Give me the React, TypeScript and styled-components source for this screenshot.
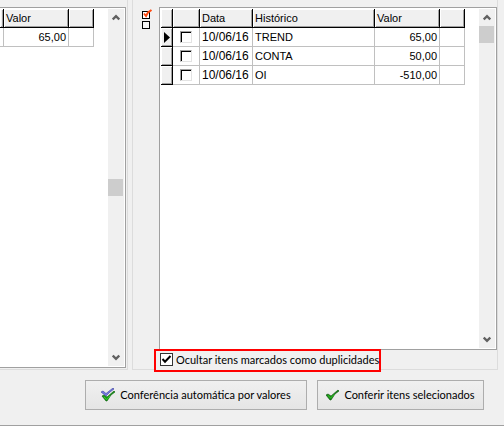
import React from "react";
import styled, { createGlobalStyle, css } from "styled-components";

const GlobalStyle = createGlobalStyle`
  * { box-sizing: border-box; }
  body {
    margin: 0;
    background: #f0f0f0;
    color: #000;
    font: 11px/16px Lato, "Liberation Sans", sans-serif;
  }
  button, input { font: inherit; color: inherit; margin: 0; }
`;

const Page = styled.main`
  display: flex;
  flex-direction: column;
  min-height: 100vh;
  border-bottom: 1px solid #a0a0a0;
  overflow: hidden;
`;

const Panels = styled.div`
  display: flex;
  flex: 1;
  gap: 4px;
  padding-right: 6px;
`;

const AccountPanel = styled.section`
  display: flex;
  flex: 0 0 128px;
  padding: 7px 1px 1px 0;
  border: solid #dcdcdc;
  border-width: 0 1px 1px 0;
`;

const StatementPanel = styled.section`
  display: flex;
  flex: 1;
  min-width: 0;
  padding-top: 7px;
  border: solid #dcdcdc;
  border-width: 0 1px 1px 1px;
`;

const StatementBody = styled.div`
  display: flex;
  flex-direction: column;
  flex: 1;
  min-width: 0;
`;

const SelectTools = styled.div`
  flex: 0 0 26px;
  padding: 2px 0 0 9px;
`;

const ToolButton = styled.button`
  display: block;
  padding: 0;
  border: 0;
  background: none;
  svg { display: block; }
`;

const GridFrame = styled.div<{ $openLeft?: boolean }>`
  display: flex;
  flex: 1;
  min-width: 0;
  padding: 1px;
  background: #fff;
  border: 1px solid #a0a0a0;
  ${(p) => p.$openLeft && css`
    border-left: 0;
    padding-left: 0;
  `}
`;

const GridArea = styled.div`
  flex: 1;
  min-width: 0;
  overflow: hidden;
`;

const Table = styled.table<{ $width: number }>`
  width: ${(p) => p.$width}px;
  table-layout: fixed;
  border-collapse: separate;
  border-spacing: 0;
  font-family: "Liberation Sans", Arial, sans-serif;
`;

const raised = css`
  background: #f0f0f0;
  border-right: 1px solid #000;
  border-bottom: 1px solid #000;
  box-shadow: inset 1px 1px #fff, inset -1px -1px #a0a0a0;
`;

const HeadCell = styled.th`
  ${raised}
  height: 19px;
  padding: 0 2px;
  font-weight: 400;
  text-align: left;
  white-space: nowrap;
  line-height: 16px;
`;

const Cell = styled.td<{ $align?: "right" | "center" }>`
  height: 19px;
  padding: 0 2px;
  border-right: 1px solid #c0c0c0;
  border-bottom: 1px solid #c0c0c0;
  text-align: ${(p) => p.$align ?? "left"};
  white-space: nowrap;
  line-height: 16px;
`;

const DateCell = styled(Cell)`
  font-size: 12px;
`;

const MarkerCell = styled.td`
  ${raised}
  height: 19px;
  padding: 0 0 0 3px;
  svg { display: block; }
`;

const RowCheck = styled.input`
  appearance: none;
  display: block;
  width: 12px;
  height: 12px;
  margin: 0 auto;
  background: #fff;
  border: 1px solid #e3e3e3;
  border-top-color: #a0a0a0;
  border-left-color: #a0a0a0;
  box-shadow: inset 1px 1px #000;
`;

const ScrollBar = styled.div`
  display: flex;
  flex-direction: column;
  flex: 0 0 16px;
  background: #f0f0f0;
`;

const ScrollArrow = styled.button`
  flex: 0 0 17px;
  padding: 0;
  border: 0;
  background: none;
  svg { display: block; margin: 0 auto 0 4px; }
`;

const Track = styled.div<{ $before: number; $after: number }>`
  display: grid;
  flex: 1;
  grid-template-rows: ${(p) => p.$before}fr 17px ${(p) => p.$after}fr;
`;

const Thumb = styled.div`
  grid-row: 2;
  width: 15px;
  background: #cdcdcd;
`;

const OptionRow = styled.div`
  display: flex;
  height: 23px;
  margin: -1px 0 -3px -5px;
  position: relative;
`;

const HideOption = styled.label`
  display: flex;
  align-items: center;
  gap: 3px;
  padding: 0 0 2px 4px;
  border: 2px solid #f00;
  background: #f0f0f0;
  white-space: nowrap;
`;

const CheckBox = styled.span`
  display: grid;
  width: 13px;
  height: 13px;
  background: #fff;
  border: 1px solid #333;
  input, svg { grid-area: 1 / 1; }
  input { appearance: none; width: 11px; height: 11px; }
  svg { pointer-events: none; visibility: hidden; }
  input:checked + svg { visibility: visible; }
`;

const Actions = styled.footer`
  display: flex;
  justify-content: flex-end;
  gap: 10px;
  padding: 10px 20px 15px 0;
`;

const ActionButton = styled.button<{ $wide?: boolean }>`
  display: flex;
  align-items: center;
  justify-content: center;
  gap: 4px;
  width: ${(p) => (p.$wide ? 222 : 167)}px;
  height: 30px;
  padding: 0;
  border: 1px solid #adadad;
  background: linear-gradient(#f0f0f0, #e5e5e5);
  white-space: nowrap;
`;

const ArrowIcon = ({ down }: { down?: boolean }) => (
  <svg width="8" height="7" viewBox="0 0 8 7">
    <path
      d={down ? "M0.7 1.5 L4 4.8 L7.3 1.5" : "M0.7 5.5 L4 2.2 L7.3 5.5"}
      fill="none"
      stroke="#606060"
      strokeWidth="2.4"
    />
  </svg>
);

const TickIcon = () => (
  <svg width="11" height="11" viewBox="0 0 11 11">
    <path d="M1.5 5 L4 7.7 L9.5 2" fill="none" stroke="#000" strokeWidth="2" />
  </svg>
);

const MarkAllIcon = () => (
  <svg width="11" height="10" viewBox="0 0 11 10">
    <rect x="0.5" y="2.5" width="7" height="7" fill="#fff" stroke="#000" />
    <path d="M2 4.5 L4 7 L6 3.5 L9.5 1" fill="none" stroke="#ff4a10" strokeWidth="2" />
  </svg>
);

const ClearAllIcon = () => (
  <svg width="11" height="10" viewBox="0 0 11 10">
    <rect x="0.5" y="2.5" width="7" height="7" fill="#f6f6f6" stroke="#000" />
  </svg>
);

const RowMarker = () => (
  <svg width="6" height="11" viewBox="0 0 6 11">
    <path d="M0 0 L6 5.5 L0 11 Z" fill="#000" />
  </svg>
);

const GreenCheck = () => (
  <svg width="14" height="12" viewBox="0 0 14 12">
    <path
      d="M0 6 L2 5 L5 7 L12 1 L13 2 L9 5 L5 11 L4 11 Z"
      fill="#168c16"
      stroke="#064f06"
      strokeWidth="0.6"
    />
    <path d="M2 6.5 L4.7 9 L8 5.5" fill="none" stroke="#35c526" />
  </svg>
);

const DoubleCheck = () => (
  <svg width="15" height="14" viewBox="0 0 15 14">
    <path
      d="M1 8 L3 7 L6 9 L13 3 L14 4 L10 7 L6 13 L5 13 Z"
      fill="#169c16"
      stroke="#065506"
      strokeWidth="0.6"
    />
    <path d="M3 9 L5.7 11.5 L9 8" fill="none" stroke="#3bd02b" />
    <path
      d="M0 4 L2 3 L5 5.5 L12 0 L13 1 L9 4 L5 8 Z"
      fill="#7478e0"
      stroke="#3a3f9c"
      strokeWidth="0.6"
    />
  </svg>
);

const VerticalScroll = ({ before, after }: { before: number; after: number }) => (
  <ScrollBar>
    <ScrollArrow type="button" aria-label="Rolar para cima"><ArrowIcon /></ScrollArrow>
    <Track $before={before} $after={after}><Thumb /></Track>
    <ScrollArrow type="button" aria-label="Rolar para baixo"><ArrowIcon down /></ScrollArrow>
  </ScrollBar>
);

const entries = [
  { date: "10/06/16", description: "TREND", amount: "65,00" },
  { date: "10/06/16", description: "CONTA", amount: "50,00" },
  { date: "10/06/16", description: "OI", amount: "-510,00" },
];

export default function App() {
  return (
    <>
      <GlobalStyle />
      <Page>
        <Panels>
          <AccountPanel>
            <GridFrame $openLeft>
              <GridArea>
                <Table $width={94}>
                  <colgroup>
                    <col width="4" /><col width="65" /><col width="25" />
                  </colgroup>
                  <thead>
                    <tr><HeadCell /><HeadCell>Valor</HeadCell><HeadCell /></tr>
                  </thead>
                  <tbody>
                    <tr><Cell /><Cell $align="right">65,00</Cell><Cell /></tr>
                  </tbody>
                </Table>
              </GridArea>
              <VerticalScroll before={153} after={153} />
            </GridFrame>
          </AccountPanel>
          <StatementPanel>
            <SelectTools>
              <ToolButton type="button" aria-label="Marcar todos"><MarkAllIcon /></ToolButton>
              <ToolButton type="button" aria-label="Desmarcar todos"><ClearAllIcon /></ToolButton>
            </SelectTools>
            <StatementBody>
              <GridFrame>
                <GridArea>
                  <Table $width={304}>
                    <colgroup>
                      <col width="12" /><col width="27" /><col width="53" />
                      <col width="122" /><col width="65" /><col width="25" />
                    </colgroup>
                    <thead>
                      <tr>
                        <HeadCell /><HeadCell /><HeadCell>Data</HeadCell>
                        <HeadCell>Histórico</HeadCell><HeadCell>Valor</HeadCell><HeadCell />
                      </tr>
                    </thead>
                    <tbody>
                      {entries.map((e, i) => (
                        <tr key={e.description}>
                          <MarkerCell>{i === 0 && <RowMarker />}</MarkerCell>
                          <Cell $align="center">
                            <RowCheck type="checkbox" aria-label={e.description} />
                          </Cell>
                          <DateCell>{e.date}</DateCell>
                          <Cell>{e.description}</Cell>
                          <Cell $align="right">{e.amount}</Cell>
                          <Cell />
                        </tr>
                      ))}
                    </tbody>
                  </Table>
                </GridArea>
                <VerticalScroll before={0} after={1} />
              </GridFrame>
              <OptionRow>
                <HideOption>
                  <CheckBox>
                    <input type="checkbox" defaultChecked />
                    <TickIcon />
                  </CheckBox>
                  Ocultar itens marcados como duplicidades
                </HideOption>
              </OptionRow>
            </StatementBody>
          </StatementPanel>
        </Panels>
        <Actions>
          <ActionButton type="button" $wide>
            <DoubleCheck />
            Conferência automática por valores
          </ActionButton>
          <ActionButton type="button">
            <GreenCheck />
            Conferir itens selecionados
          </ActionButton>
        </Actions>
      </Page>
    </>
  );
}
